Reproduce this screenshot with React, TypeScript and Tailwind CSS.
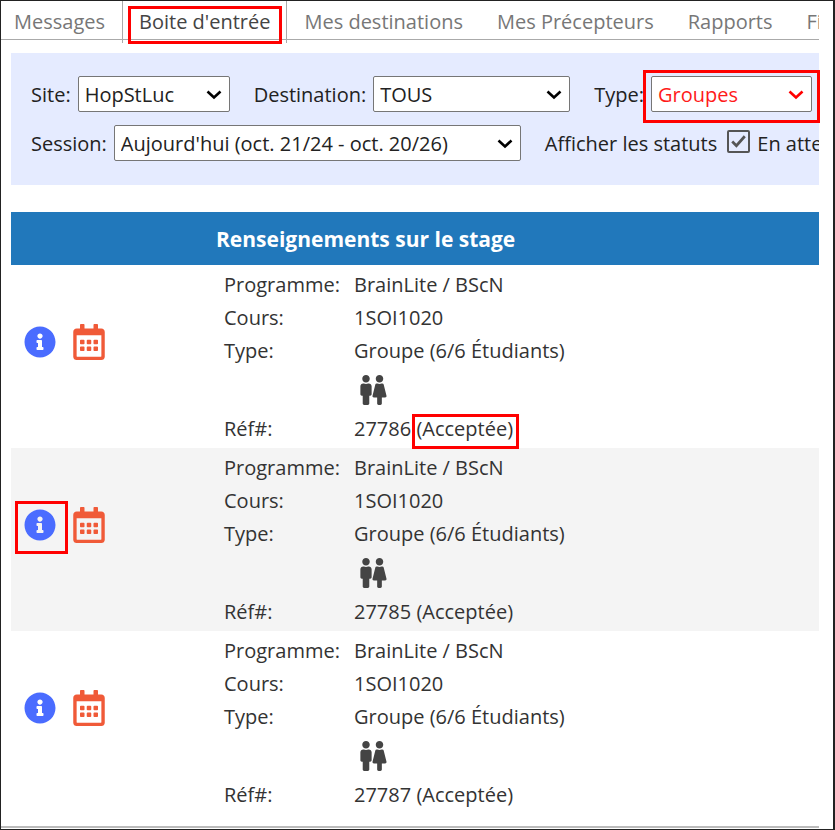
import { ReactNode } from 'react';
import { FaFemale, FaInfoCircle, FaMale, FaRegCalendarAlt } from 'react-icons/fa';
import clsx from 'clsx';

const tabs = [
  { label: 'Messages' },
  { label: "Boite d'entrée", active: true },
  { label: 'Mes destinations' },
  { label: 'Mes Précepteurs' },
  { label: 'Rapports' },
  { label: 'Fi' },
];

const placements = [
  { ref: '27786', statusMarked: true, infoMarked: false },
  { ref: '27785', statusMarked: false, infoMarked: true },
  { ref: '27787', statusMarked: false, infoMarked: false },
];

function Marker({ className }: { className: string }) {
  return <span aria-hidden="true" className={clsx('pointer-events-none absolute border-3 border-[#ff0000]', className)} />;
}

function SelectField({
  id,
  label,
  value,
  width,
  red,
  children,
}: {
  id: string;
  label: string;
  value: string;
  width: string;
  red?: boolean;
  children?: ReactNode;
}) {
  return (
    <div className="flex shrink-0 items-center gap-[7px]">
      <label htmlFor={id} className="pt-0.5">
        {label}
      </label>
      <div className={clsx('relative', width)}>
        <select
          id={id}
          defaultValue={value}
          className={clsx(
            'block h-9 w-full appearance-none rounded-xs border border-[#767676] bg-white pt-0.5 pl-1.5',
            red ? 'text-[#ff1a1a]' : 'text-[#222]',
          )}
        >
          <option>{value}</option>
        </select>
        <svg
          viewBox="0 0 16 10"
          aria-hidden="true"
          className={clsx('pointer-events-none absolute top-3.5 right-2 h-2.5 w-4', red ? 'text-[#ff0000]' : 'text-black')}
        >
          <path d="M1.5 1.5 8 7.5l6.500-6" fill="none" stroke="currentColor" strokeWidth="2.600" />
        </svg>
        {children}
      </div>
    </div>
  );
}

function Line({ label, children }: { label: string; children: ReactNode }) {
  return (
    <div className="flex h-[33px] items-center">
      <dt className="w-[130px]">{label}</dt>
      <dd>{children}</dd>
    </div>
  );
}

export default function App() {
  return (
    <div className="min-h-screen border border-r-2 border-[#222] bg-white pr-3.5 font-['Open_Sans','Noto_Sans',sans-serif] text-[20px] leading-7 text-[#333]">
      <nav className="flex h-[42px] items-start overflow-x-clip">
        {tabs.map((tab) => (
          <a
            key={tab.label}
            href="#"
            className={clsx(
              'whitespace-nowrap',
              tab.active
                ? 'relative h-[42px] shrink-0 border-x border-[#aaa] text-[#444]'
                : 'h-[39px] shrink-0 text-[#777] last:shrink last:grow',
            )}
          >
            <span
              className={clsx(
                'block h-[39px] border-b border-[#aaa] pt-[7px]',
                tab.active ? 'px-4' : 'px-[17px]',
                tab.label === 'Messages' && 'pl-[13px]',
                tab.label === 'Fi' && 'pr-0',
              )}
            >
              {tab.label}
            </span>
            {tab.active && <Marker className="top-[5px] right-1 left-[5px] h-[38px]" />}
          </a>
        ))}
      </nav>

      <main className="pl-2.5">
        <form className="mt-2.5 h-[132px] bg-[#e5ebff] pt-[23px] pl-5 text-[#222]">
          <div className="flex gap-6">
            <SelectField id="site" label="Site:" value="HopStLuc" width="w-[152px]" />
            <SelectField id="destination" label="Destination:" value="TOUS" width="w-[197px]" />
            <SelectField id="type" label="Type:" value="Groupes" width="w-[161px]" red>
              <Marker className="-inset-x-2 -top-1.5 -bottom-[11px]" />
            </SelectField>
          </div>
          <div className="mt-[13px] flex gap-6 overflow-x-clip">
            <SelectField id="session" label="Session:" value="Aujourd'hui (oct. 21/24 - oct. 20/26)" width="w-[407px]" />
            <div className="flex shrink-0 items-center">
              <span className="pt-0.5">Afficher les statuts</span>
              <span className="relative mr-[7px] mb-1 ml-2.5 size-[23px]">
                <input
                  id="pending"
                  type="checkbox"
                  defaultChecked
                  className="block size-[23px] appearance-none rounded-xs border-2 border-[#555]"
                />
                <svg viewBox="0 0 22 22" aria-hidden="true" className="pointer-events-none absolute inset-0 size-[23px]">
                  <path d="m5 11 4 4 8-9" fill="none" stroke="#555" strokeWidth="2.600" />
                </svg>
              </span>
              <label htmlFor="pending" className="pt-0.5">
                En atte
              </label>
            </div>
          </div>
        </form>

        <table className="mt-[27px] w-full border-collapse">
          <thead>
            <tr className="h-[53px] bg-[#2178bb] text-left text-white">
              <td className="w-[205px]" />
              <th scope="col" className="p-0 text-[21px] font-bold">
                Renseignements sur le stage
              </th>
            </tr>
          </thead>
          <tbody>
            {placements.map((placement) => (
              <tr key={placement.ref} className="even:bg-[#f4f4f4]">
                <td className="p-0 align-middle">
                  <div className="flex items-center gap-[17px] pb-[29px] pl-[13px]">
                    <button type="button" aria-label="Informations" className="relative text-[#4a6cff]">
                      <FaInfoCircle className="size-8" />
                      {placement.infoMarked && <Marker className="-top-2 -left-[9px] size-[53px]" />}
                    </button>
                    <button type="button" aria-label="Calendrier" className="text-[#f05a38]">
                      <FaRegCalendarAlt className="h-9 w-8" />
                    </button>
                  </div>
                </td>
                <td className="py-[3px] pr-0 pl-2">
                  <dl>
                    <Line label="Programme:">BrainLite / BScN</Line>
                    <Line label="Cours:">1SOI1020</Line>
                    <Line label="Type:">Groupe (6/6 Étudiants)</Line>
                    <dd className="flex h-[45px] items-center pl-[136px] text-[#444]">
                      <FaMale className="h-[30px] w-3" />
                      <FaFemale className="h-[30px] w-[15px]" />
                    </dd>
                    <Line label="Réf#:">
                      {placement.ref}{' '}
                      <span className="relative">
                        (Acceptée)
                        {placement.statusMarked && <Marker className="-top-px -right-1.5 -bottom-[7px] -left-1" />}
                      </span>
                    </Line>
                  </dl>
                </td>
              </tr>
            ))}
          </tbody>
        </table>
      </main>
      <hr className="mt-3 border-t-2 border-[#bbb]" />
    </div>
  );
}
